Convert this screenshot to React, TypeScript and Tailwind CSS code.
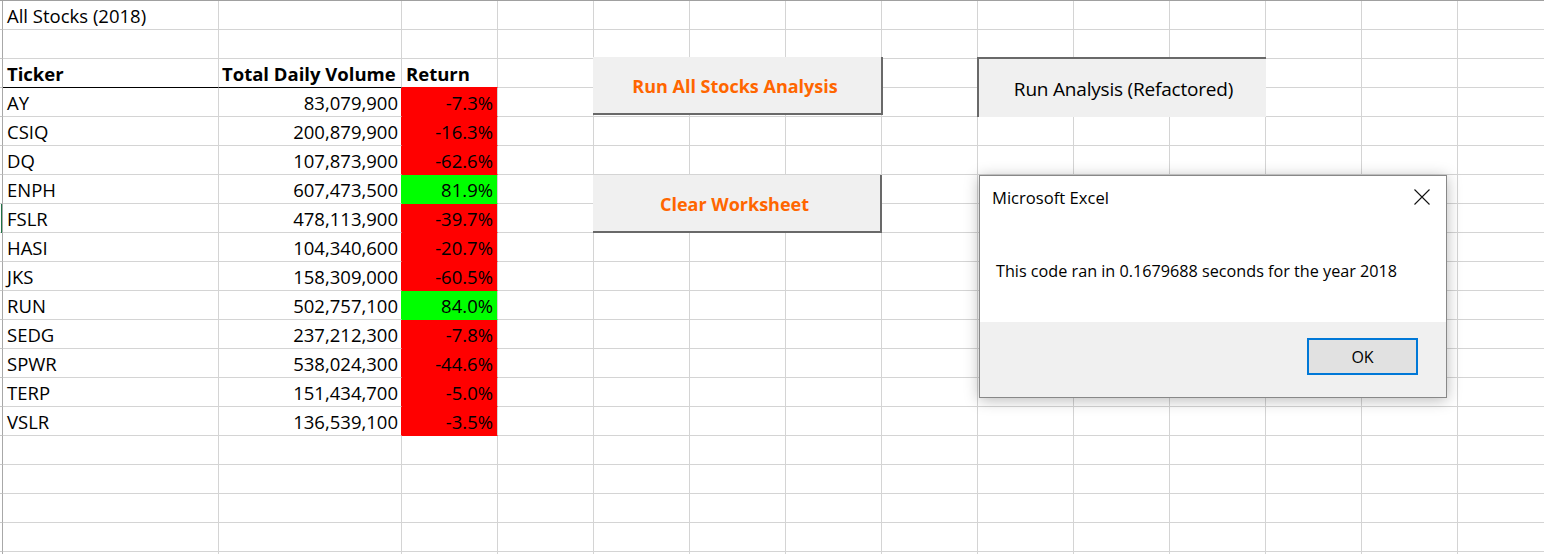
import React from "react";

type Row = { t: string; v: string; r: string; up: boolean };

const data: Row[] = [
  { t: "AY", v: "83,079,900", r: "-7.3%", up: false },
  { t: "CSIQ", v: "200,879,900", r: "-16.3%", up: false },
  { t: "DQ", v: "107,873,900", r: "-62.6%", up: false },
  { t: "ENPH", v: "607,473,500", r: "81.9%", up: true },
  { t: "FSLR", v: "478,113,900", r: "-39.7%", up: false },
  { t: "HASI", v: "104,340,600", r: "-20.7%", up: false },
  { t: "JKS", v: "158,309,000", r: "-60.5%", up: false },
  { t: "RUN", v: "502,757,100", r: "84.0%", up: true },
  { t: "SEDG", v: "237,212,300", r: "-7.8%", up: false },
  { t: "SPWR", v: "538,024,300", r: "-44.6%", up: false },
  { t: "TERP", v: "151,434,700", r: "-5.0%", up: false },
  { t: "VSLR", v: "136,539,100", r: "-3.5%", up: false },
];

const cell = "h-[29px] border-r border-b border-[#d4d4d4] whitespace-nowrap overflow-visible leading-[28px] pt-px";
const edge = "h-[29px] border-r border-b border-r-[#a8a8a8] border-b-[#c8c8c8] relative";
const extraCols = Array.from({ length: 11 });

function EmptyRest({ k }: { k: string }) {
  return (
    <>
      {extraCols.map((_, i) => (
        <div key={k + i} className={cell} />
      ))}
    </>
  );
}

export default function App() {
  const rows: React.ReactNode[] = [];

  rows.push(
    <React.Fragment key="r1">
      <div className={edge} />
      <div className={`${cell} pl-[4px] pt-[2px]`}>All Stocks (2018)</div>
      <div className={cell} />
      <div className={cell} />
      <EmptyRest k="r1" />
    </React.Fragment>
  );
  rows.push(
    <React.Fragment key="r2">
      <div className={edge} />
      <div className={cell} />
      <div className={cell} />
      <div className={cell} />
      <EmptyRest k="r2" />
    </React.Fragment>
  );
  rows.push(
    <React.Fragment key="r3">
      <div className={edge} />
      <div className={`${cell} pl-[4px] font-bold border-b-black`}>Ticker</div>
      <div className={`${cell} pl-[3px] font-bold border-b-black`}>Total Daily Volume</div>
      <div className={`${cell} pl-[4px] font-bold border-b-[#ff0000]`}>Return</div>
      <EmptyRest k="r3" />
    </React.Fragment>
  );
  data.forEach((d, i) => {
    const fill = d.up ? "bg-[#00ff00] border-b-[#00ff00]" : "bg-[#ff0000] border-b-[#ff0000]";
    const bRight = d.up ? "border-r-[#00ff00]" : "border-r-[#ff0000]";
    rows.push(
      <React.Fragment key={"d" + i}>
        <div className={edge}>
          {d.t === "FSLR" && <div className="absolute left-[1px] top-0 w-px h-[29px] bg-[#217346]" />}
        </div>
        <div className={`${cell} pl-[4px]`}>{d.t}</div>
        <div className={`${cell} ${bRight} text-right pr-[3px]`}>{d.v}</div>
        <div className={`${cell} ${fill} text-right pr-[4px]`}>{d.r}</div>
        <EmptyRest k={"d" + i} />
      </React.Fragment>
    );
  });
  for (let i = 0; i < 6; i++) {
    rows.push(
      <React.Fragment key={"e" + i}>
        <div className={edge} />
        <div className={cell} />
        <div className={cell} />
        <div className={cell} />
        <EmptyRest k={"e" + i} />
      </React.Fragment>
    );
  }

  return (
    <div className="w-[1544px] h-[554px] overflow-hidden bg-white relative font-['Open_Sans',sans-serif] text-[18.5px] text-black">
      <div className="border-t border-[#a0a0a0] grid grid-cols-[3px_216px_183px_96px_repeat(11,96px)]">
        {rows}
      </div>

      {/* Form buttons */}
      <div className="absolute left-[593px] top-[57px] w-[290px] h-[58px] bg-[#f0f0f0] border-r-2 border-b-2 border-[#696969] flex items-center justify-center pr-[4px] pt-[3px]">
        <span className="font-['Open_Sans',sans-serif] font-bold text-[18px] text-[#ff6600]">Run All Stocks Analysis</span>
      </div>
      <div className="absolute left-[593px] top-[175px] w-[289px] h-[58px] bg-[#f0f0f0] border-r-2 border-b-2 border-[#696969] flex items-center justify-center pr-[4px] pt-[3px]">
        <span className="font-['Open_Sans',sans-serif] font-bold text-[18px] text-[#ff6600]">Clear Worksheet</span>
      </div>
      <div className="absolute left-[977px] top-[57px] w-[289px] h-[60px] bg-[#f0f0f0] border-l-2 border-t-2 border-[#696969] flex items-center justify-center pl-[2px] pt-[2px]">
        <span className="font-['Open_Sans',sans-serif] text-[19px] text-black tracking-[-0.2px]">Run Analysis (Refactored)</span>
      </div>

      {/* Message box */}
      <div className="absolute left-[979px] top-[175px] w-[468px] h-[223px] bg-white border border-[#888888] shadow-[0_2px_14px_rgba(0,0,0,0.28)] flex flex-col font-['Open_Sans',sans-serif] text-[16.2px]">
        <div className="h-[146px] flex flex-col">
          <div className="flex items-start justify-between pl-[12px] pr-[16px] pt-[10px]">
            <span className="leading-[24px] text-[16.6px]">Microsoft Excel</span>
            <svg width="16" height="16" viewBox="0 0 16 16" className="mt-[3px]">
              <path d="M0.5 0.5 L15.5 15.5 M15.5 0.5 L0.5 15.5" stroke="#111" strokeWidth="1.1" fill="none" />
            </svg>
          </div>
          <div className="pl-[16px] pt-[49px] leading-[24px]">This code ran in 0.1679688 seconds for the year 2018</div>
        </div>
        <div className="flex-1 bg-[#f0f0f0] flex justify-end items-start pt-[16px] pr-[28px]">
          <div className="w-[111px] h-[37px] border-2 border-[#0078d7] bg-[#e1e1e1] flex items-center justify-center text-[16px]">
            OK
          </div>
        </div>
      </div>
    </div>
  );
}
